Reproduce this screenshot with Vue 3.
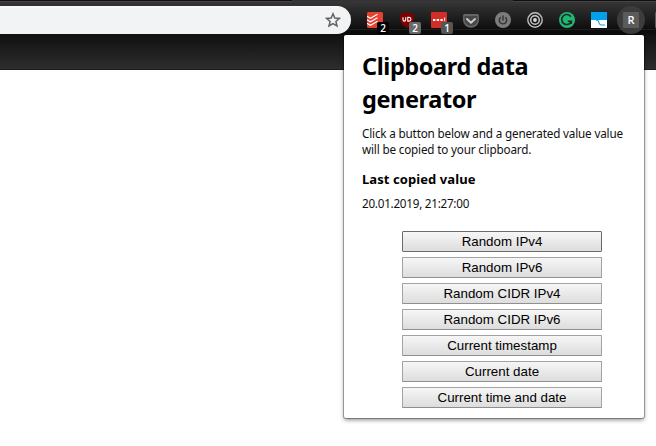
<script setup>
import { ref } from 'vue'

const actions = [
  'Random IPv4',
  'Random IPv6',
  'Random CIDR IPv4',
  'Random CIDR IPv6',
  'Current timestamp',
  'Current date',
  'Current time and date',
]
const focused = ref(0)
</script>

<template>
  <div class="screen">
    <header class="toolbar">
      <div class="address">
        <svg class="star" viewBox="0 0 16 16" width="16" height="16">
          <path d="M8 1.8 L9.8 6 L14.4 6.4 L10.9 9.4 L12 13.9 L8 11.5 L4 13.9 L5.1 9.4 L1.6 6.4 L6.2 6 Z" fill="none" stroke="#5f6368" stroke-width="1.5" />
        </svg>
      </div>
      <nav class="extensions">
        <span class="ext">
          <svg viewBox="0 0 16 16" width="16" height="16">
            <rect width="16" height="16" rx="1.5" fill="#e44332" />
            <path d="M0 4.2 L3.5 6.2 L10.5 2.3 M0 7.7 L3.5 9.7 L10.5 5.8 M0 11.2 L3.5 13.2 L10.5 9.3" fill="none" stroke="#fff" stroke-width="1.2" />
          </svg>
          <b class="badge black">2</b>
        </span>
        <span class="ext">
          <svg viewBox="0 0 16 16" width="16" height="16">
            <path d="M8 0 C10 1.5 12 2 15 2 C15 9 14 13 8 16 C2 13 1 9 1 2 C4 2 6 1.5 8 0 Z" fill="#800000" />
            <path d="M4 5.2 V7.8 Q4 9.1 5.3 9.1 Q6.7 9.1 6.7 7.8 V5.2 M8.8 5.4 V9.1 H10 Q12 9 12 7.2 Q12 5.5 10 5.4 Z" fill="none" stroke="#fff" stroke-width="1.1" />
          </svg>
          <b class="badge light">2</b>
        </span>
        <span class="ext">
          <svg viewBox="0 0 16 16" width="16" height="16">
            <rect width="16" height="16" rx="1" fill="#d32d27" />
            <path d="M2 8 H4.4 M5.7 8 H8.1 M9.4 8 H11.8" stroke="#fff" stroke-width="2.2" />
            <path d="M13.7 5.5 V9.2" stroke="#fff" stroke-width="1" />
          </svg>
          <b class="badge">1</b>
        </span>
        <span class="ext">
          <svg viewBox="0 0 16 16" width="16" height="16">
            <path d="M1.5 2 H14.5 Q16 2 16 3.5 V8 A8 7.7 0 0 1 0 8 V3.5 Q0 2 1.5 2 Z" fill="#666" />
            <path d="M1.5 4 H14.5 V8 A6.5 6 0 0 1 1.5 8 Z" fill="#484848" />
            <path d="M4 7 L8 10.7 L12 7" fill="none" stroke="#ccc" stroke-width="1.9" stroke-linecap="round" stroke-linejoin="round" />
          </svg>
        </span>
        <span class="ext">
          <svg viewBox="0 0 16 16" width="16" height="16">
            <circle cx="8" cy="8" r="8" fill="#7c7c7c" />
            <path d="M5.8 5.2 A3.7 3.7 0 1 0 10.2 5.2 M8 3.6 V8.4" fill="none" stroke="#333" stroke-width="1.4" />
          </svg>
        </span>
        <span class="ext">
          <svg viewBox="0 0 16 16" width="16" height="16">
            <circle cx="8" cy="8" r="7.2" fill="none" stroke="#c0c0c0" stroke-width="1.4" />
            <circle cx="8" cy="8" r="4.3" fill="none" stroke="#c8c8c8" stroke-width="1.5" />
            <circle cx="8" cy="8" r="1.9" fill="#d8d8d8" />
          </svg>
        </span>
        <span class="ext">
          <svg viewBox="0 0 16 16" width="16" height="16">
            <circle cx="8" cy="8" r="8" fill="#1db874" />
            <path d="M11.9 4.8 A5 5 0 1 0 12.4 9.3 H8.8 M12.2 9 V12" fill="none" stroke="#242424" stroke-width="1.6" />
          </svg>
        </span>
        <span class="ext">
          <svg viewBox="0 0 16 16" width="16" height="16">
            <rect width="16" height="16" fill="#fff" />
            <path d="M0 0 H16 V8 H0 Z" fill="#00a2ee" />
            <path d="M5 8.2 H6.3 Q7.5 8.4 7.8 10 Q8.3 13 10.3 13 H14" fill="none" stroke="#1a9fe0" stroke-width="1.1" />
          </svg>
        </span>
        <span class="ext active"><i class="letter">R</i></span>
        <span class="ext"><i class="letter"></i></span>
      </nav>
    </header>
    <div class="site-band"></div>

    <section class="popup">
      <h1>Clipboard data<br />generator</h1>
      <p class="intro">Click a button below and a generated value value<br />will be copied to your clipboard.</p>
      <h2>Last copied value</h2>
      <p class="last">20.01.2019, 21:27:00</p>
      <div class="actions">
        <button v-for="(label, i) in actions" :key="label" :class="{ focused: i === focused }" @click="focused = i">{{ label }}</button>
      </div>
    </section>
  </div>
</template>

<style>
body { margin: 0; background: #fff; overflow: hidden; }
</style>

<style scoped>
.screen { position: relative; width: 656px; height: 446px; overflow: hidden; background: #fff; font-family: "Noto Sans", sans-serif; color: #000; }
.toolbar { height: 34px; box-sizing: border-box; padding-top: 6px; display: flex; background: linear-gradient(90deg, #101010 292px, #333 292px 513px, #101010 513px) 0 0 / 100% 1px no-repeat, linear-gradient(90deg, #454345 292px, #363636 292px 513px, #454345 513px) 0 1px / 100% 1px no-repeat, linear-gradient(transparent 29px, #202020 29px 30px, #0c0c0c 30px), linear-gradient(#383838, #0e0e0e 29px); }
.address { width: 351px; height: 28px; box-sizing: border-box; padding: 6px 10px 0 0; display: flex; justify-content: flex-end; flex: none; background: linear-gradient(#fbf9fc 0 1px, #f1f3f4 2px); border-radius: 0 14px 14px 0; }
.extensions { display: flex; margin-left: 8px; flex: none; }
.ext { position: relative; width: 32px; height: 28px; display: flex; justify-content: center; align-items: center; flex: none; }
.ext svg { display: block; }
.badge { position: absolute; left: 18px; top: 16px; width: 12px; height: 12px; border-radius: 2px; background: #555; color: #fff; font: 600 10px/12px "Open Sans", sans-serif; text-align: center; }
.badge.black { background: #000; }
.badge.light { background: #6a6a6a; }
.active::before { content: ""; position: absolute; left: 2px; top: 0; width: 28px; height: 28px; border-radius: 50%; background: #3c3c3c; }
.letter { position: relative; width: 16px; height: 16px; background: #5b5b5b; color: #fff; font: 600 11px/16px "Open Sans", sans-serif; text-align: center; border-radius: 1px; }
.site-band { height: 36px; background: linear-gradient(transparent 35px, #1d1d1d 35px), linear-gradient(#101010, #2e2e2e); }
.popup { position: absolute; left: 344px; top: 35px; width: 300px; height: 383px; box-sizing: border-box; padding: 15px 18px 0; background: #fff; border-radius: 2px; box-shadow: 0 0 0 1px rgba(0,0,0,.28), 0 2px 4px rgba(0,0,0,.45); }
h1 { margin: 0; font-size: 23.5px; line-height: 33px; font-weight: 700; letter-spacing: -0.4px; white-space: nowrap; }
p { margin: 0; font-size: 11.7px; line-height: 16px; letter-spacing: -0.17px; color: #111; white-space: nowrap; }
.intro { margin-top: 9px; }
h2 { margin: 13px 0 0; font-size: 13px; line-height: 18px; font-weight: 700; letter-spacing: 0.08px; }
.last { margin-top: 7px; letter-spacing: -0.26px; }
.actions { margin: 20px 0 0 40px; width: 200px; display: flex; flex-direction: column; gap: 5px; }
button { height: 21px; box-sizing: border-box; padding: 0; border: 1px solid #a3a3a3; border-bottom-color: #8f8f8f; border-radius: 1px; background: linear-gradient(#f6f6f6, #dddddd); color: #000; font: 13.33px/19px "Liberation Sans", Arial, sans-serif; }
button.focused { border-color: #6b6b6b; }
</style>
